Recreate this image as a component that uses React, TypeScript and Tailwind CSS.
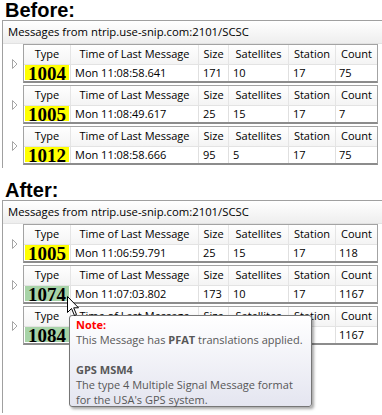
import React from "react";

type Row = {
  type: string;
  time: string;
  size: string;
  sat: string;
  st: string;
  count: string;
  green?: boolean;
};

const before: Row[] = [
  { type: "1004", time: "Mon 11:08:58.641", size: "171", sat: "10", st: "17", count: "75" },
  { type: "1005", time: "Mon 11:08:49.617", size: "25", sat: "15", st: "17", count: "7" },
  { type: "1012", time: "Mon 11:08:58.666", size: "95", sat: "5", st: "17", count: "75" },
];

const after: Row[] = [
  { type: "1005", time: "Mon 11:06:59.791", size: "25", sat: "15", st: "17", count: "118" },
  { type: "1074", time: "Mon 11:07:03.802", size: "173", sat: "10", st: "17", count: "1167", green: true },
  { type: "1084", time: "Mon 11:07:03.806", size: "201", sat: "10", st: "17", count: "1167", green: true },
];

function Expander() {
  return (
    <svg width="6" height="10" viewBox="0 0 6 10" className="block">
      <path d="M0.5 0.5 L5 5 L0.5 9.5 Z" fill="#ffffff" stroke="#a6a6a6" strokeWidth="1" />
    </svg>
  );
}

function Table({ r }: { r: Row }) {
  const hc = "flex items-center justify-center border-r border-[#e5e5e5] h-full";
  const dc = "flex items-center pl-[4px] border-r border-[#e0e0e0] h-full";
  return (
    <div className="flex items-center h-[39px]">
      <div className="w-[20px] flex items-center justify-start pl-[9px]">
        <Expander />
      </div>
      <div className="w-[355px] h-[39px] border border-[#a3a3a3] border-b-2 border-b-[#8c8c8c] flex flex-col">
        <div className="flex h-[19px] bg-linear-to-b from-white to-[#f4f4f4] text-black">
          <div className={`${hc} w-[47px]`}>Type</div>
          <div className={`${hc} w-[128px]`}>Time of Last Message</div>
          <div className={`${hc} w-[30px]`}>Size</div>
          <div className={`${hc} w-[60px]`}>Satellites</div>
          <div className={`${hc} w-[47px]`}>Station</div>
          <div className="flex items-center justify-center h-full w-[41px]">Count</div>
        </div>
        <div className="flex h-[17px] border-t border-[#e3e3e3] bg-white text-black">
          <div className="w-[47px] h-full border-r border-[#e0e0e0] pl-[1px] pr-[1px] pb-[1px] flex items-end">
            <div
              className={`w-full h-[15px] flex items-end justify-center font-bold text-[19px] leading-[15px] ${
                r.green ? "bg-[#a7d3a7]" : "bg-[#ffff00]"
              }`}
              style={{ fontFamily: '"Liberation Serif", "Times New Roman", serif' }}
            >
              <span className="relative top-[1px]">{r.type}</span>
            </div>
          </div>
          <div className={`${dc} w-[128px]`}>{r.time}</div>
          <div className={`${dc} w-[30px] pl-[2px]`}>{r.size}</div>
          <div className={`${dc} w-[60px]`}>{r.sat}</div>
          <div className={`${dc} w-[47px] pl-[2px]`}>{r.st}</div>
          <div className="flex items-center pl-[3px] h-full w-[41px]">{r.count}</div>
        </div>
      </div>
    </div>
  );
}

function Panel({ rows, tall }: { rows: Row[]; tall?: boolean }) {
  return (
    <div
      className={`ml-[2px] border-l border-t border-[#a0a0a0] flex flex-col ${
        tall ? "h-[213px]" : "h-[148px]"
      }`}
    >
      <div className="h-[23px] bg-linear-to-b from-white to-[#eeeeee] border-b border-[#e2e2e2] flex items-center pl-[5px] text-black text-[11.3px]">
        Messages from ntrip.use-snip.com:2101/SCSC
      </div>
      <div className="flex flex-col gap-[2px] pt-[0px]">
        {rows.map((r, i) => (
          <Table key={i} r={r} />
        ))}
      </div>
    </div>
  );
}

function Heading({ children }: { children: React.ReactNode }) {
  return (
    <div
      className="h-[20px] pl-[5px] font-bold text-[20px] leading-[20px] text-black"
      style={{ fontFamily: '"Liberation Sans", Arial, sans-serif' }}
    >
      {children}
    </div>
  );
}

export default function App() {
  return (
    <div
      className="relative w-[382px] h-[415px] bg-white overflow-hidden text-[11px]"
      style={{ fontFamily: '"Open Sans", "Noto Sans", sans-serif' }}
    >
      <Heading>Before:</Heading>
      <Panel rows={before} />
      <div className="h-[12px]" />
      <Heading>After:</Heading>
      <Panel rows={after} tall />

      {/* tooltip */}
      <div className="absolute left-[69px] top-[315px] w-[243px] h-[92px] rounded-[3px] border border-[#767676] bg-linear-to-b from-white to-[#e4e5f0] shadow-[2px_2px_3px_rgba(0,0,0,0.35)] px-[6px] pt-[1px] text-[11px] leading-[15px] text-[#575757]">
        <div className="font-bold text-[#ff0000]">Note:</div>
        <div>
          This Message has <span className="font-bold">PFAT</span> translations applied.
        </div>
        <div className="h-[15px]" />
        <div className="font-bold">GPS MSM4</div>
        <div>The type 4 Multiple Signal Message format</div>
        <div>for the USA's GPS system.</div>
      </div>

      {/* mouse cursor */}
      <svg
        className="absolute left-[67px] top-[296px]"
        width="13"
        height="21"
        viewBox="0 0 13 21"
      >
        <path
          d="M0.5 0.5 L0.5 16.5 L4.5 12.5 L7.5 19.5 L9.5 18.5 L6.7 11.8 L11.5 11.8 Z"
          fill="#ffffff"
          stroke="#000000"
          strokeWidth="1"
          strokeLinejoin="miter"
        />
      </svg>
    </div>
  );
}
